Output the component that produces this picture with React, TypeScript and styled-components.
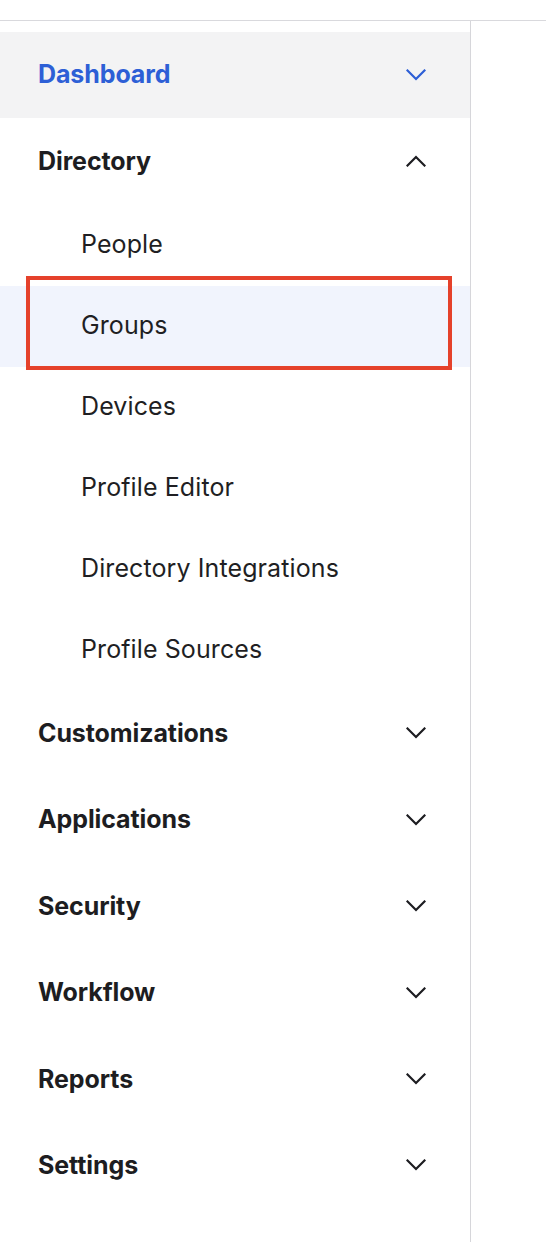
import React from "react";
import styled, { createGlobalStyle } from "styled-components";

const GlobalStyle = createGlobalStyle`
  html, body {
    margin: 0;
    padding: 0;
    background: #ffffff;
  }
  body {
    font-family: Inter, "Noto Sans", "Liberation Sans", sans-serif;
    -webkit-font-smoothing: antialiased;
  }
  * { box-sizing: border-box; }
`;

const Page = styled.div`
  display: flex;
  flex-direction: column;
  min-height: 1242px;
`;

const TopBar = styled.header`
  height: 21px;
  border-bottom: 1px solid #d9d9dd;
  flex: none;
`;

const Body = styled.div`
  display: flex;
  flex: 1;
`;

const Sidebar = styled.nav`
  width: 471px;
  flex: none;
  border-right: 1px solid #d6d6da;
  padding-top: 11px;
  display: flex;
  flex-direction: column;
`;

const Main = styled.main`
  flex: 1;
`;

const SectionRow = styled.div<{ $active?: boolean }>`
  height: 86.4px;
  display: flex;
  align-items: center;
  justify-content: space-between;
  padding: 0 44px 0 38px;
  background: ${(p) => (p.$active ? "#f3f3f4" : "transparent")};
  color: ${(p) => (p.$active ? "#2d5fd6" : "#1d1d21")};
  font-size: 25px;
  font-weight: 700;
  letter-spacing: -0.1px;
  line-height: 1;
  padding-bottom: 1px;
`;

const SubList = styled.ul`
  list-style: none;
  margin: 0;
  padding: 0;
`;

const SubItem = styled.li<{ $selected?: boolean }>`
  position: relative;
  height: 81px;
  display: flex;
  align-items: center;
  padding-left: 81px;
  padding-bottom: 1px;
  font-size: 25px;
  font-weight: 400;
  letter-spacing: 0.1px;
  line-height: 1;
  color: #1f1f23;
  background: ${(p) => (p.$selected ? "#f1f4fd" : "transparent")};
`;

/* Callout frame drawn over the selected entry */
const Callout = styled.span`
  position: absolute;
  left: 26px;
  top: -10px;
  width: 426px;
  height: 94px;
  border: 4px solid #e5412b;
  pointer-events: none;
`;

const Chevron = ({ up, color }: { up?: boolean; color: string }) => (
  <svg width="20" height="12" viewBox="0 0 20 12" fill="none">
    <path
      d={up ? "M1.5 10.5 L10 2 L18.5 10.5" : "M1.5 1.5 L10 10 L18.5 1.5"}
      stroke={color}
      strokeWidth="2.2"
      strokeLinecap="square"
    />
  </svg>
);

const sections = [
  "Customizations",
  "Applications",
  "Security",
  "Workflow",
  "Reports",
  "Settings",
];

const directoryItems = [
  "People",
  "Groups",
  "Devices",
  "Profile Editor",
  "Directory Integrations",
  "Profile Sources",
];

export default function App() {
  return (
    <>
      <GlobalStyle />
      <Page>
        <TopBar />
        <Body>
          <Sidebar>
            <SectionRow $active>
              <span>Dashboard</span>
              <Chevron color="#2d5fd6" />
            </SectionRow>
            <SectionRow>
              <span>Directory</span>
              <Chevron up color="#1d1d21" />
            </SectionRow>
            <SubList>
              {directoryItems.map((item) => (
                <SubItem key={item} $selected={item === "Groups"}>
                  {item}
                  {item === "Groups" && <Callout />}
                </SubItem>
              ))}
            </SubList>
            {sections.map((s) => (
              <SectionRow key={s}>
                <span>{s}</span>
                <Chevron color="#1d1d21" />
              </SectionRow>
            ))}
          </Sidebar>
          <Main />
        </Body>
      </Page>
    </>
  );
}
